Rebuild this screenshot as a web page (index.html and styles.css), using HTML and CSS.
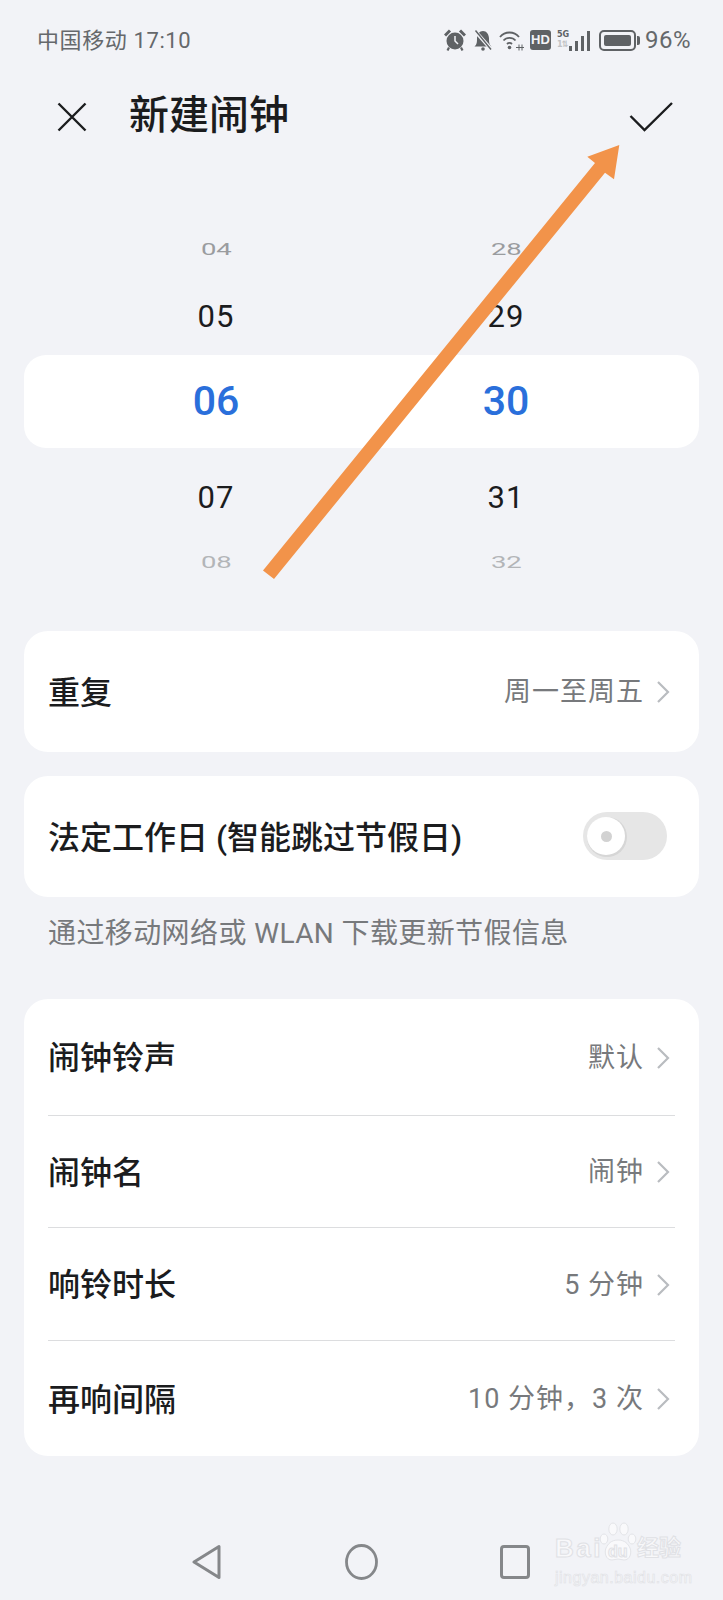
FILE: index.html
```html
<!DOCTYPE html>
<html lang="zh">
<head>
<meta charset="utf-8">
<title>新建闹钟</title>
<link rel="stylesheet" href="styles.css">
</head>
<body>
<div class="screen">
  <header class="status">
    <span class="status-left">中国移动 17:10</span>
    <div class="status-right">
      <svg class="ic alarm" width="22" height="22" viewBox="0 0 22 22"><circle cx="11" cy="12" r="8.500" fill="#5f6265"/><path d="M11 7v5l3 3" fill="none" stroke="#f2f3f7" stroke-width="1.500"/><path d="M1 6.500 6 1.500M21 6.500 16 1.500" stroke="#5f6265" stroke-width="3" fill="none"/><path d="M5 18.500 3.500 21.500M17 18.500 18.500 21.500" stroke="#5f6265" stroke-width="2.200" fill="none"/></svg>
      <svg class="ic bell" width="20" height="22" viewBox="0 0 20 22"><path d="M1.500 17.500c2.500-2 2.500-4.500 2.500-8 0-4 2.500-7.500 6-7.500s6 3.500 6 7.500c0 3.500 0 6 2.500 8z" fill="#5f6265"/><circle cx="10" cy="20" r="1.800" fill="#5f6265"/><path d="M2 2l16 18" stroke="#f2f3f7" stroke-width="3.500"/><path d="M2.500 1.500l15.500 19" stroke="#5f6265" stroke-width="1.400"/></svg>
      <svg class="ic wifi" width="25" height="22" viewBox="0 0 25 22"><g fill="none" stroke="#5f6265" stroke-width="1.800"><path d="M1 8c5-6 14-6 19 0"/><path d="M4.500 11.500c3-3.500 9-3.500 12 0"/><path d="M8 15c1.500-1.500 3.500-1.500 5 0"/></g><circle cx="10.500" cy="18.500" r="1.800" fill="#5f6265"/><path d="M17 18.500h8M20 15.500v6M23 15.500v6" stroke="#5f6265" stroke-width="1" fill="none"/></svg>
      <span class="hd">HD</span>
      <span class="signal">
        <span class="net"><span class="net-top">5G</span><span class="net-low">1⇅</span></span>
        <span class="bar b1"></span><span class="bar b2"></span><span class="bar b3"></span><span class="bar b4"></span>
      </span>
      <span class="battery"><span class="battery-fill"></span></span><span class="battery-cap"></span>
      <span class="pct">96%</span>
    </div>
  </header>

  <div class="titlebar">
    <svg class="x" width="30" height="30" viewBox="0 0 30 30"><path d="M1.500 1.500l27 27M28.500 1.500l-27 27" stroke="#1b1c1e" stroke-width="2.400" fill="none"/></svg>
    <h1 class="title">新建闹钟</h1>
    <svg class="check" width="44" height="30" viewBox="0 0 44 30"><path d="M1.500 14L15.500 28 43 1" stroke="#1b1c1e" stroke-width="2.400" fill="none"/></svg>
  </div>

  <section class="picker">
    <div class="row row-far r1"><span>04</span><span>28</span></div>
    <div class="row row-near r2"><span>05</span><span>29</span></div>
    <div class="row row-sel"><span>06</span><span>30</span></div>
    <div class="row row-near r4"><span>07</span><span>31</span></div>
    <div class="row row-far r5"><span>08</span><span>32</span></div>
  </section>

  <section class="card single">
    <span class="label">重复</span>
    <span class="value">周一至周五<svg class="chev" width="14" height="24" viewBox="0 0 14 24"><path d="M2 2l10 10L2 22" fill="none" stroke="#b9bcc0" stroke-width="2.200"/></svg></span>
  </section>

  <section class="card single second">
    <span class="label">法定工作日 (智能跳过节假日)</span>
    <span class="toggle"><span class="knob"><span class="dot"></span></span></span>
  </section>
  <p class="note">通过移动网络或 WLAN 下载更新节假信息</p>

  <section class="card list">
    <div class="item item1"><span class="label">闹钟铃声</span><span class="value">默认<svg class="chev" width="14" height="24" viewBox="0 0 14 24"><path d="M2 2l10 10L2 22" fill="none" stroke="#b9bcc0" stroke-width="2.200"/></svg></span></div>
    <div class="item"><span class="label">闹钟名</span><span class="value">闹钟<svg class="chev" width="14" height="24" viewBox="0 0 14 24"><path d="M2 2l10 10L2 22" fill="none" stroke="#b9bcc0" stroke-width="2.200"/></svg></span></div>
    <div class="item item3"><span class="label">响铃时长</span><span class="value">5 分钟<svg class="chev" width="14" height="24" viewBox="0 0 14 24"><path d="M2 2l10 10L2 22" fill="none" stroke="#b9bcc0" stroke-width="2.200"/></svg></span></div>
    <div class="item item4"><span class="label">再响间隔</span><span class="value">10 分钟，3 次<svg class="chev" width="14" height="24" viewBox="0 0 14 24"><path d="M2 2l10 10L2 22" fill="none" stroke="#b9bcc0" stroke-width="2.200"/></svg></span></div>
  </section>

  <nav class="navbar">
    <svg width="30" height="36" viewBox="0 0 30 36"><path d="M27 2.500v31L2 18z" fill="none" stroke="#85878a" stroke-width="3" stroke-linejoin="round"/></svg>
    <svg width="33" height="36" viewBox="0 0 33 36"><ellipse cx="16.500" cy="18" rx="15" ry="16.500" fill="none" stroke="#85878a" stroke-width="2.800"/></svg>
    <svg width="30" height="34" viewBox="0 0 30 34"><rect x="1.500" y="1.500" width="27" height="31" rx="2.500" fill="none" stroke="#85878a" stroke-width="3"/></svg>
  </nav>

  <div class="watermark">
    <div class="wm-top">
      <span class="wm-bai">Bai</span>
      <span class="wm-paw">
        <svg class="wm-paw-art" width="38" height="40" viewBox="0 0 38 40"><g fill="#f9f9fb" stroke="#e3e4e8" stroke-width="1"><ellipse cx="5" cy="17" rx="3.800" ry="5"/><ellipse cx="14" cy="7" rx="4.200" ry="6"/><ellipse cx="25" cy="7" rx="4.200" ry="6"/><ellipse cx="33" cy="17" rx="3.800" ry="5"/><path d="M19 18c7 0 10 4 12 8 2 5 0 12-6 12-2 0-4-1-6-1s-4 1-6 1c-6 0-8-7-6-12 2-4 5-8 12-8z"/></g></svg>
        <span class="wm-du">du</span>
      </span>
      <span class="wm-cn">经验</span>
    </div>
    <div class="wm-url">jingyan.baidu.com</div>
  </div>

  <svg class="arrow" width="723" height="600" viewBox="0 0 723 600"><path d="M263 570.500 L274 579 L605 172.700 L614 179.300 L619.300 145 L587.300 156.700 L595 163 Z" fill="#f2934a"/></svg>
</div>
</body>
</html>
```

FILE: styles.css
```css
* { box-sizing: border-box; }
html, body { margin: 0; padding: 0; }
body {
  background: #f2f3f7;
  font-family: Roboto, "Noto Sans CJK SC", sans-serif;
  color: #1b1c1e;
}
.screen { position: relative; width: 723px; height: 1600px; overflow: hidden; }

.status {
  display: flex; justify-content: space-between; align-items: center;
  height: 24px; margin-top: 28px; padding: 0 32px 0 37px;
  color: #65686b;
}
.status-left { font-size: 22px; letter-spacing: 0.6px; line-height: 24px; padding-top: 1px; }
.status-right { display: flex; align-items: center; }
.ic { display: block; flex: none; }
.bell { margin-left: 7px; }
.wifi { margin-left: 6px; }
.hd {
  width: 21px; height: 20px; margin-left: 6px; border-radius: 3px; background: #5f6265; color: #f2f3f7;
  font: 700 13px/20px "Liberation Sans", sans-serif; text-align: center;
}
.signal { display: flex; align-items: flex-end; height: 22px; margin-left: 6px; }
.net {
  display: flex; flex-direction: column; width: 12px; align-self: flex-start;
  font: 700 9px/10px "DejaVu Sans Condensed", "DejaVu Sans", sans-serif;
}
.net-top { color: #5f6265; }
.net-low { color: #c0c2c5; letter-spacing: -1px; white-space: nowrap; }
.bar { width: 3px; margin-right: 3px; background: #5f6265; }
.b4 { margin-right: 0; }
.b1 { height: 5px; } .b2 { height: 10px; } .b3 { height: 15px; } .b4 { height: 20px; }
.battery {
  display: block; width: 37px; height: 21px; margin-left: 9px; padding: 3px;
  border: 2px solid #5f6265; border-radius: 5px;
}
.battery-fill { display: block; width: 100%; height: 100%; background: #5f6265; border-radius: 2px; }
.battery-cap { width: 3px; height: 9px; margin-left: 1px; background: #5f6265; border-radius: 0 2px 2px 0; }
.pct { font-size: 24px; line-height: 24px; margin-left: 5px; letter-spacing: 0.5px; }

.titlebar {
  display: flex; align-items: center; height: 60px; margin-top: 35px; padding: 0 50px 0 57px;
}
.x { flex: none; }
.title { margin: 0 0 0 42px; font-size: 40px; font-weight: 500; line-height: 60px; flex: 1; padding-bottom: 2px; }
.check { flex: none; }

.picker { margin: 71px 24px 0; }
.row { display: grid; grid-template-columns: 288px 288px; column-gap: 2px; padding: 0 0 0 48px; text-align: center; }
.row span { justify-self: center; }
.r1 { height: 60px; line-height: 64px; color: #9a9c9f; }
.r2 { height: 77px; line-height: 77px; }
.r4 { height: 99px; line-height: 99px; }
.r5 { height: 29px; line-height: 31px; color: #b3b5b8; }
.row-far { font-size: 22px; }
.row-far span { transform: scale(1.25, 0.72); }
.row-near { font-size: 31px; letter-spacing: 1px; }
.row-sel {
  height: 93px; background: #fff; border-radius: 22px;
  font-size: 41px; font-weight: 500; line-height: 93px; color: #2a6fdb;
}

.card { background: #fff; border-radius: 24px; margin: 0 24px; }
.single {
  display: flex; justify-content: space-between; align-items: center;
  height: 121px; margin-top: 55px; padding: 0 24px;
}
.second { margin-top: 24px; }
.label { font-size: 32px; font-weight: 500; line-height: 40px; color: #1b1c1e; padding-top: 2px; }
.value { display: flex; align-items: center; font-size: 27px; line-height: 40px; color: #77797c; letter-spacing: 1px; padding-top: 1px; }
.chev { flex: none; margin: 0 5px 0 12px; }
.toggle {
  display: block; width: 84px; height: 48px; border-radius: 24px; background: #e6e6e6; padding: 5px 0 0 4px; margin: 0 8px 1px 0;
}
.knob {
  display: flex; align-items: center; justify-content: center;
  width: 38px; height: 38px; border-radius: 50%; background: #fff; box-shadow: 1px 1px 0 1px #d6d6d6;
}
.dot { width: 11px; height: 11px; border-radius: 50%; background: #d2d2d2; }
.note { margin: 17px 0 0 48px; font-size: 28px; letter-spacing: 0.4px; line-height: 40px; color: #77797c; }

.list { margin-top: 45px; padding: 0 24px; height: 457px; }
.item {
  display: flex; justify-content: space-between; align-items: center; height: 112px;
  border-top: 1px solid #dcdddf;
}
.item1 { border-top: 0; height: 116px; }
.item3 { height: 113px; }
.item4 { height: 116px; }

.navbar {
  display: flex; align-items: center; gap: 122.500px;
  position: absolute; left: 192px; top: 1544px;
}
.watermark { position: absolute; left: 555px; top: 1522px; width: 130px; font-family: "Liberation Sans", "Noto Sans CJK SC", sans-serif; }
.wm-top { display: flex; align-items: flex-end; height: 40px; }
.wm-bai, .wm-cn, .wm-du { color: #f8f8fa; -webkit-text-stroke: 1px #e0e1e5; }
.wm-bai { font-size: 26px; font-weight: 700; line-height: 28px; letter-spacing: 2.500px; }
.wm-paw { position: relative; width: 38px; height: 40px; flex: none; margin-left: -4px; }
.wm-paw-art { position: absolute; left: 0; top: 0; }
.wm-du { position: absolute; left: 9px; top: 22px; font-size: 16px; font-weight: 700; line-height: 16px; }
.wm-cn { font-size: 22px; font-weight: 700; line-height: 28px; white-space: nowrap; }
.wm-url { margin-top: 7px; font-size: 16px; line-height: 18px; white-space: nowrap; color: #f8f8fa; -webkit-text-stroke: 0.6px #e0e1e5; letter-spacing: 0.5px; }
.arrow { position: absolute; left: 0; top: 0; pointer-events: none; }
```
